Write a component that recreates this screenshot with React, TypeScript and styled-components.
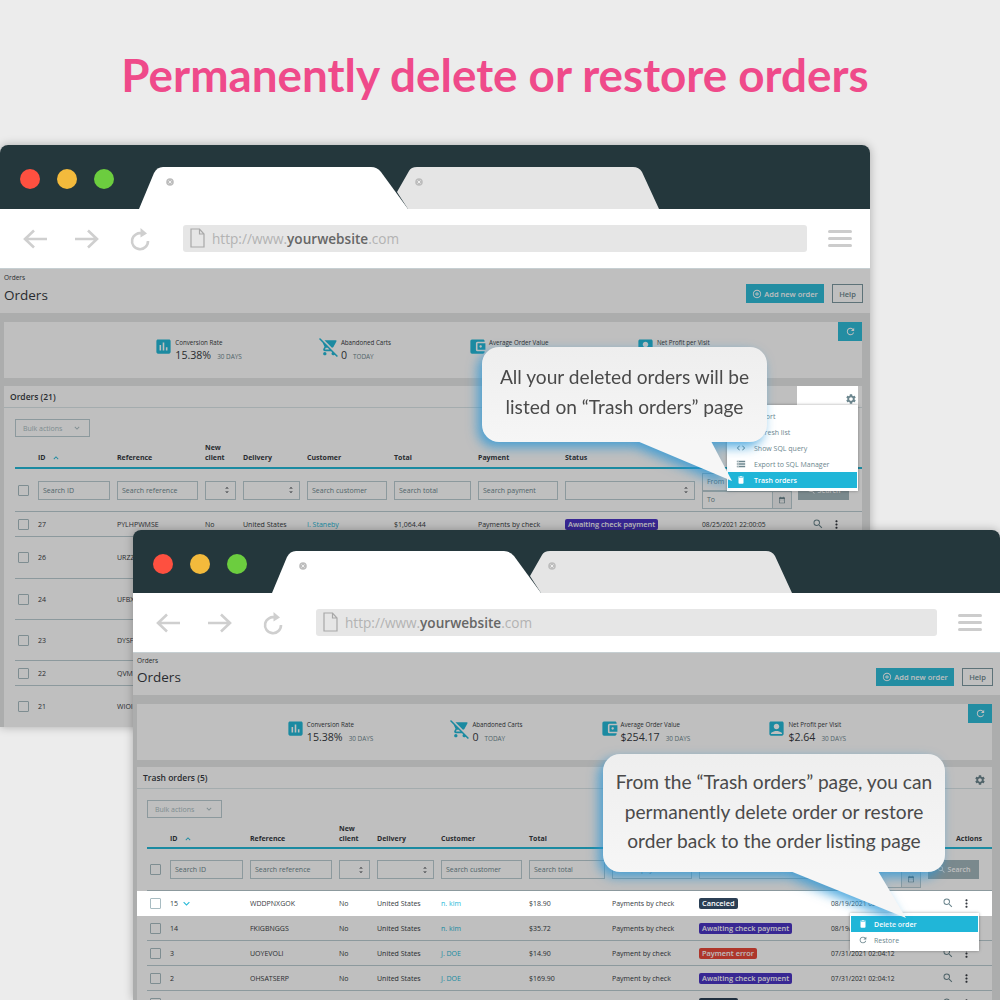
import { ReactElement, ReactNode } from 'react';
import styled, { createGlobalStyle } from 'styled-components';
import {
  MdAccountBalanceWallet,
  MdAccountBox,
  MdAddCircleOutline,
  MdAssessment,
  MdCloudUpload,
  MdCode,
  MdDateRange,
  MdDelete,
  MdKeyboardArrowDown,
  MdKeyboardArrowUp,
  MdMoreVert,
  MdRefresh,
  MdRemoveShoppingCart,
  MdSearch,
  MdSettings,
  MdStorage,
  MdUnfoldMore,
} from 'react-icons/md';

const GlobalStyle = createGlobalStyle`
  html, body {
    margin: 0;
    background: #ececec;
  }
  * {
    box-sizing: border-box;
  }
`;

const Page = styled.div`
  position: relative;
  width: 1000px;
  height: 1000px;
  overflow: hidden;
  background: #ececec;
`;

const Headline = styled.h1`
  margin: 0;
  padding: 47px 10px 0 0;
  text-align: center;
  font-family: 'Lato', sans-serif;
  font-weight: 700;
  font-size: 45.8px;
  line-height: 56px;
  color: #ef4a8a;
`;

const Window = styled.div<{ $x: number; $y: number; $w: number; $h: number }>`
  position: absolute;
  isolation: isolate;
  left: ${(p) => p.$x}px;
  top: ${(p) => p.$y}px;
  width: ${(p) => p.$w}px;
  height: ${(p) => p.$h}px;
  border-radius: 8px 8px 0 0;
  box-shadow: 0 0 10px rgba(0, 0, 0, 0.28);
  display: flex;
  flex-direction: column;
`;

const TitleBar = styled.div<{ $compact?: boolean }>`
  flex: none;
  height: ${(p) => (p.$compact ? 63 : 64)}px;
  display: flex;
  padding-left: 20px;
  gap: 17px;
  background: #24373c;
  border-radius: 8px 8px 0 0;
`;

const Light = styled.span<{ $color: string }>`
  flex: none;
  width: 20px;
  height: 20px;
  margin-top: 24px;
  border-radius: 50%;
  background: ${(p) => p.$color};
`;

const Tabs = styled.svg`
  align-self: flex-end;
  margin-left: 8px;
  display: block;
`;

const Toolbar = styled.div`
  flex: none;
  height: 59px;
  display: flex;
  align-items: center;
  background: #fff;
  padding: 0 18px 0 23px;
`;

const NavIcon = styled.svg`
  flex: none;
  display: block;
  margin-right: 28px;
`;

const ReloadIcon = styled.svg`
  flex: none;
  display: block;
  margin-left: 3px;
`;

const AddressBar = styled.div`
  flex: 1;
  height: 27px;
  margin: -1px 21px 0 33px;
  padding-left: 7px;
  display: flex;
  align-items: center;
  gap: 7px;
  border-radius: 3px;
  background: #e6e6e6;
  font-family: 'Open Sans', sans-serif;
  font-size: 13.6px;
  color: #b3b3b3;

  strong {
    font-weight: 600;
    color: #666;
  }
`;

const Burger = styled.div`
  flex: none;
  width: 24px;
  display: flex;
  flex-direction: column;
  gap: 4px;

  span {
    height: 3px;
    border-radius: 2px;
    background: #ccc;
  }
`;

const Content = styled.div`
  position: relative;
  flex: 1;
  overflow: hidden;
  background: #e6e7e7;
  border-top: 1px solid #c6cfd2;
  font-family: 'Open Sans', sans-serif;
  color: #363a41;

  &::after {
    content: '';
    position: absolute;
    inset: 0;
    z-index: 1;
    background: rgba(0, 0, 0, 0.25);
  }
`;

const PageHeader = styled.div<{ $compact?: boolean }>`
  height: ${(p) => (p.$compact ? 42 : 44)}px;
  background: #fff;
  padding: ${(p) => (p.$compact ? 3 : 4)}px 7px 0 4px;
  display: flex;
  justify-content: space-between;
`;

const Crumb = styled.div`
  font-size: 6.5px;
  line-height: 9px;
`;

const PageTitle = styled.div<{ $compact?: boolean }>`
  font-size: 13.5px;
  line-height: 18px;
  margin-top: ${(p) => (p.$compact ? 3 : 4)}px;
`;

const HeaderButtons = styled.div<{ $compact?: boolean }>`
  display: flex;
  gap: 8px;
  margin-top: ${(p) => (p.$compact ? 12 : 11)}px;
  height: ${(p) => (p.$compact ? 18 : 19)}px;
`;

const AddButton = styled.div`
  width: 78px;
  display: flex;
  align-items: center;
  justify-content: center;
  gap: 2px;
  background: #2fbcd9;
  color: #fff;
  font-size: 7.5px;
  font-weight: 600;
  white-space: nowrap;
`;

const HelpButton = styled.div`
  width: 31px;
  display: flex;
  align-items: center;
  justify-content: center;
  border: 1px solid #7d99a1;
  color: #6c868e;
  font-size: 7.5px;
  font-weight: 600;
`;

const Body = styled.div<{ $compact?: boolean }>`
  padding: 9px 8px 0 4px;
  display: flex;
  flex-direction: column;
  gap: ${(p) => (p.$compact ? 7 : 8)}px;
`;

const KpiCard = styled.div`
  position: relative;
  height: 56px;
  background: #fff;
  display: flex;
  justify-content: center;
  gap: 77px;
  padding: 15px 0 0 3px;
`;

const KpiRefresh = styled.div`
  position: absolute;
  top: 0;
  right: 0;
  width: 24px;
  height: 19px;
  display: flex;
  align-items: center;
  justify-content: center;
  background: #2fbcd9;
  color: #fff;
`;

const Kpi = styled.div`
  display: flex;
  gap: 2px;
  color: #25b9d7;
`;

const KpiText = styled.div`
  color: #363a41;
  font-size: 6.2px;
  line-height: 9px;
  padding-top: 1px;
`;

const KpiValue = styled.div`
  display: flex;
  align-items: baseline;
  gap: 6px;
  font-size: 10.6px;
  line-height: 15px;
  margin-top: 1px;

  small {
    font-size: 6.4px;
    color: #6c868e;
  }
`;

const TableCard = styled.div<{ $left: number }>`
  position: relative;
  background: #fff;
  height: 500px;
  padding-left: ${(p) => p.$left}px;
`;

const CardHead = styled.div<{ $left: number }>`
  height: 22px;
  margin-left: -${(p) => p.$left}px;
  padding: 0 6px;
  display: flex;
  align-items: center;
  border-bottom: 1px solid #dbe6e9;
  font-size: 8.5px;
  font-weight: 600;
`;

const GearCorner = styled.div<{ $lit?: boolean }>`
  position: absolute;
  top: 0;
  right: ${(p) => (p.$lit ? 4 : 5)}px;
  width: 61px;
  height: 19px;
  display: flex;
  align-items: flex-end;
  justify-content: flex-end;
  padding-right: 1px;
  color: #6c868e;
  background: ${(p) => (p.$lit ? '#fff' : 'transparent')};
  z-index: ${(p) => (p.$lit ? 2 : 0)};
`;

const BulkSelect = styled.div`
  width: 75px;
  height: 18px;
  margin: 11px 0 6px;
  padding: 0 7px;
  display: flex;
  align-items: center;
  justify-content: space-between;
  border: 1px solid #bbcdd2;
  color: #a9bcc1;
  font-size: 7px;
`;

const Grid = styled.div<{ $cols: string; $h: number }>`
  display: grid;
  grid-template-columns: ${(p) => p.$cols};
  height: ${(p) => p.$h}px;
  align-items: center;
  font-size: 7px;
`;

const HeadRow = styled(Grid)`
  align-items: end;
  border-bottom: 2px solid #25b9d7;
  padding-bottom: 4px;
  font-weight: 700;
  line-height: 10px;
`;

const HeadCell = styled.div`
  display: flex;
  align-items: center;
  gap: 5px;
  color: #363a41;
`;

const ActionsHead = styled(HeadCell)`
  justify-content: flex-end;
`;

const FilterRow = styled(Grid)`
  border-bottom: 1px solid #bbcdd2;
  align-items: center;
`;

const Field = styled.div`
  height: 19px;
  margin-right: 7px;
  padding: 0 4px;
  display: flex;
  align-items: center;
  justify-content: space-between;
  border: 1px solid #bbcdd2;
  background: #fff;
  color: #6c868e;
  font-size: 7px;
  white-space: nowrap;
`;

const DateStack = styled.div`
  width: 90px;
  display: flex;
  flex-direction: column;
  margin-top: 1px;
`;

const DateField = styled(Field)`
  height: 18px;
  margin-right: 0;
  padding: 0 0 0 4px;

  span {
    width: 19px;
    height: 100%;
    display: flex;
    align-items: center;
    justify-content: center;
    border-left: 1px solid #bbcdd2;
    background: #eff1f2;
  }
`;

const SearchButton = styled.div`
  width: 51px;
  height: 19px;
  display: flex;
  align-items: center;
  justify-content: center;
  gap: 2px;
  background: #a3b7bd;
  color: #fff;
  font-size: 7px;
  font-weight: 600;
`;

const Check = styled.span`
  display: block;
  width: 11px;
  height: 11px;
  margin-left: 3px;
  border: 1px solid #a8bcc2;
  border-radius: 1px;
  background: #fff;
`;

const DataRow = styled(Grid)<{ $lit?: boolean }>`
  position: relative;
  white-space: nowrap;
  border-bottom: 1px solid #bbcdd2;
  color: #363a41;
  ${(p) =>
    p.$lit &&
    `
    z-index: 2;
    margin: 0 0 0 -10px;
    padding: 0 10px;
    width: 855px;
    background: #fff;
    border-bottom-color: #fff;
  `}
`;

const IdCell = styled.div`
  display: flex;
  align-items: center;
  gap: 2px;
  color: #25b9d7;

  span {
    color: #363a41;
  }
`;

const Customer = styled.div`
  color: #25b9d7;
`;

const OrderDate = styled.div`
  font-size: 6.7px;
`;

const Badge = styled.span<{ $bg: string }>`
  display: inline-block;
  padding: 1px 3px;
  border-radius: 2px;
  background: ${(p) => p.$bg};
  color: #fff;
  font-size: 7.4px;
  font-weight: 600;
  line-height: 9px;
`;

const RowActions = styled.div`
  display: flex;
  align-items: center;
  gap: 6px;
  padding-left: 14px;
  color: #6c868e;

  svg:last-child {
    color: #363a41;
  }
`;

const Menu = styled.div<{ $x: number; $y: number; $w: number }>`
  position: absolute;
  left: ${(p) => p.$x}px;
  top: ${(p) => p.$y}px;
  width: ${(p) => p.$w}px;
  z-index: 3;
  padding: 3px 1px;
  background: #fff;
  box-shadow: 0 0 3px rgba(0, 0, 0, 0.35);
`;

const MenuItem = styled.div<{ $active?: boolean; $tight?: boolean }>`
  height: 16px;
  display: flex;
  align-items: center;
  gap: ${(p) => (p.$tight ? 6 : 8)}px;
  padding-left: ${(p) => (p.$tight ? 7 : 8)}px;
  font-size: 7px;
  background: ${(p) => (p.$active ? '#20b6d8' : 'transparent')};
  color: ${(p) => (p.$active ? '#fff' : '#6c868e')};
  font-weight: ${(p) => (p.$active ? 600 : 400)};
`;

const Bubble = styled.div<{ $x: number; $y: number; $w: number; $h: number }>`
  position: absolute;
  left: ${(p) => p.$x}px;
  top: ${(p) => p.$y}px;
  width: ${(p) => p.$w}px;
  height: ${(p) => p.$h}px;
  z-index: 4;
  filter: drop-shadow(-4px 5px 6px rgba(40, 150, 215, 0.8));
`;

const BubbleBody = styled.div<{ $lift: number }>`
  height: 100%;
  padding-bottom: ${(p) => p.$lift}px;
  display: flex;
  flex-direction: column;
  justify-content: center;
  align-items: center;
  border-radius: 17px;
  background: linear-gradient(#eeeeee, #f6f6f6);
  font-family: 'Lato', sans-serif;
  font-size: 19.15px;
  line-height: 29.6px;
  color: #4a4a4a;
  white-space: nowrap;
`;

const BubbleTail = styled.svg<{ $x: number; $y: number }>`
  position: absolute;
  left: ${(p) => p.$x}px;
  top: ${(p) => p.$y}px;
  display: block;
`;

function TabShape(): ReactElement {
  const closeDot = (cx: number): ReactElement => (
    <g>
      <circle cx={cx} cy={15} r={3.8} fill="#bdbdbd" />
      <path d={`M${cx - 1.5} 13.5l3 3m0-3l-3 3`} stroke="#eee" strokeWidth={1} />
    </g>
  );
  return (
    <Tabs width={530} height={42} viewBox="0 0 530 42">
      <path d="M258 25 L270 4 Q272 0 278 0 L494 0 Q500 0 503 5 L520 42 L269 42 Z" fill="#e5e5e5" />
      {closeDot(280)}
      <path d="M0 42 L15 6 Q18 0 24 0 L232 0 Q238 0 242 5 L269 42 Z" fill="#fff" />
      {closeDot(31)}
    </Tabs>
  );
}

function BrowserChrome({ compact }: { compact?: boolean }): ReactElement {
  return (
    <>
      <TitleBar $compact={compact}>
        <Light $color="#fe5040" />
        <Light $color="#f3ba3c" />
        <Light $color="#6ccd3f" />
        <TabShape />
      </TitleBar>
      <Toolbar>
        <NavIcon width={24} height={20} viewBox="0 0 24 20" fill="none" stroke="#cfcfcf" strokeWidth={2.6}>
          <path d="M24 10H2M11 1.5L2 10l9 8.5" />
        </NavIcon>
        <NavIcon width={24} height={20} viewBox="0 0 24 20" fill="none" stroke="#cfcfcf" strokeWidth={2.6}>
          <path d="M0 10h22M13 1.5l9 8.5-9 8.5" />
        </NavIcon>
        <ReloadIcon width={20} height={24} viewBox="0 0 20 24">
          <path d="M12.5 6.6A8 8 0 1 0 18 14" fill="none" stroke="#cfcfcf" strokeWidth={2.6} />
          <path d="M10.5 1l6.5 5.5-6.5 4z" fill="#cfcfcf" />
        </ReloadIcon>
        <AddressBar>
          <svg width={15} height={20} viewBox="0 0 15 20" fill="none" stroke="#a8a8a8" strokeWidth={1.2}>
            <path d="M1 1h8.5L14 6v13H1zM9.5 1v5H14" />
          </svg>
          <span>
            http://www.<strong>yourwebsite</strong>.com
          </span>
        </AddressBar>
        <Burger>
          <span />
          <span />
          <span />
        </Burger>
      </Toolbar>
    </>
  );
}

interface KpiData {
  icon: ReactNode;
  label: string;
  value: string;
  period: string;
}

const kpis: KpiData[] = [
  { icon: <MdAssessment size={19} />, label: 'Conversion Rate', value: '15.38%', period: '30 DAYS' },
  { icon: <MdRemoveShoppingCart size={20} />, label: 'Abandoned Carts', value: '0', period: 'TODAY' },
  { icon: <MdAccountBalanceWallet size={19} />, label: 'Average Order Value', value: '$254.17', period: '30 DAYS' },
  { icon: <MdAccountBox size={19} />, label: 'Net Profit per Visit', value: '$2.64', period: '30 DAYS' },
];

function KpiStrip(): ReactElement {
  return (
    <KpiCard>
      {kpis.map((kpi) => (
        <Kpi key={kpi.label}>
          {kpi.icon}
          <KpiText>
            {kpi.label}
            <KpiValue>
              {kpi.value}
              <small>{kpi.period}</small>
            </KpiValue>
          </KpiText>
        </Kpi>
      ))}
      <KpiRefresh>
        <MdRefresh size={11} />
      </KpiRefresh>
    </KpiCard>
  );
}

function AdminHeader({ compact }: { compact?: boolean }): ReactElement {
  return (
    <PageHeader $compact={compact}>
      <div>
        <Crumb>Orders</Crumb>
        <PageTitle $compact={compact}>Orders</PageTitle>
      </div>
      <HeaderButtons $compact={compact}>
        <AddButton>
          <MdAddCircleOutline size={10} />
          Add new order
        </AddButton>
        <HelpButton>Help</HelpButton>
      </HeaderButtons>
    </PageHeader>
  );
}

const statusColors = {
  awaiting: '#4b35c4',
  error: '#e8493a',
  canceled: '#2b3f55',
};

interface OrderRow {
  id: string;
  reference: string;
  customer: string;
  total: string;
  payment: string;
  status: string;
  tone: keyof typeof statusColors;
  date: string;
  height: number;
  open?: boolean;
}

function OrderLine({ row, cols }: { row: OrderRow; cols: string }): ReactElement {
  return (
    <DataRow $cols={cols} $h={row.height} $lit={row.open}>
      <Check />
      <IdCell>
        <span>{row.id}</span>
        {row.open && <MdKeyboardArrowDown size={13} />}
      </IdCell>
      <div>{row.reference}</div>
      <div>No</div>
      <div>United States</div>
      <Customer>{row.customer}</Customer>
      <div>{row.total}</div>
      <div>{row.payment}</div>
      <div>
        <Badge $bg={statusColors[row.tone]}>{row.status}</Badge>
      </div>
      <OrderDate>{row.date}</OrderDate>
      <RowActions>
        <MdSearch size={12} />
        <MdMoreVert size={13} />
      </RowActions>
    </DataRow>
  );
}

function TableHead({ cols, height, actions }: { cols: string; height: number; actions?: string }): ReactElement {
  return (
    <HeadRow $cols={cols} $h={height}>
      <span />
      <HeadCell>
        ID
        <MdKeyboardArrowUp size={10} color="#25b9d7" />
      </HeadCell>
      <HeadCell>Reference</HeadCell>
      <HeadCell>
        New
        <br />
        client
      </HeadCell>
      <HeadCell>Delivery</HeadCell>
      <HeadCell>Customer</HeadCell>
      <HeadCell>Total</HeadCell>
      <HeadCell>Payment</HeadCell>
      <HeadCell>Status</HeadCell>
      <HeadCell>Date</HeadCell>
      <ActionsHead>{actions}</ActionsHead>
    </HeadRow>
  );
}

function TableFilters({ cols, height }: { cols: string; height: number }): ReactElement {
  return (
    <FilterRow $cols={cols} $h={height}>
      <Check />
      <Field>Search ID</Field>
      <Field>Search reference</Field>
      <Field>
        <span />
        <MdUnfoldMore size={8} color="#363a41" />
      </Field>
      <Field>
        <span />
        <MdUnfoldMore size={8} color="#363a41" />
      </Field>
      <Field>Search customer</Field>
      <Field>Search total</Field>
      <Field>Search payment</Field>
      <Field>
        <span />
        <MdUnfoldMore size={8} color="#363a41" />
      </Field>
      <DateStack>
        <DateField>
          From
          <span>
            <MdDateRange size={8} />
          </span>
        </DateField>
        <DateField>
          To
          <span>
            <MdDateRange size={8} />
          </span>
        </DateField>
      </DateStack>
      <SearchButton>
        <MdSearch size={9} />
        Search
      </SearchButton>
    </FilterRow>
  );
}

function BulkActions(): ReactElement {
  return (
    <BulkSelect>
      Bulk actions
      <MdKeyboardArrowDown size={10} />
    </BulkSelect>
  );
}

const firstCols = '23px 79px 88px 38px 64px 87px 84px 87px 137px 96px 59px';
const secondCols = '23px 80px 89px 38px 64px 88px 83px 87px 132px 97px 54px';

const firstRows: OrderRow[] = [
  { id: '27', reference: 'PYLHPWMSE', customer: 'I. Staneby', total: '$1,064.44', payment: 'Payments by check', status: 'Awaiting check payment', tone: 'awaiting', date: '08/25/2021 22:00:05', height: 25 },
  { id: '26', reference: 'URZZOGTIS', customer: 'I. Staneby', total: '$64.90', payment: 'Payments by check', status: 'Canceled', tone: 'canceled', date: '08/25/2021 21:40:12', height: 42 },
  { id: '24', reference: 'UFBXKQWEA', customer: 'I. Staneby', total: '$35.72', payment: 'Payments by check', status: 'Canceled', tone: 'canceled', date: '08/24/2021 20:10:45', height: 41 },
  { id: '23', reference: 'DYSFLMRTO', customer: 'J. DOE', total: '$18.90', payment: 'Payments by check', status: 'Canceled', tone: 'canceled', date: '08/19/2021 02:04:12', height: 41 },
  { id: '22', reference: 'QVMHRTPBN', customer: 'J. DOE', total: '$14.90', payment: 'Payment by check', status: 'Canceled', tone: 'canceled', date: '08/19/2021 02:04:12', height: 25 },
  { id: '21', reference: 'WIOIKLNEF', customer: 'J. DOE', total: '$21.00', payment: 'Payment by check', status: 'Canceled', tone: 'canceled', date: '08/19/2021 02:04:12', height: 42 },
];

const secondRows: OrderRow[] = [
  { id: '15', reference: 'WDDPNXGOK', customer: 'n. kim', total: '$18.90', payment: 'Payments by check', status: 'Canceled', tone: 'canceled', date: '08/19/2021 02:04:12', height: 25, open: true },
  { id: '14', reference: 'FKIGBNGGS', customer: 'n. kim', total: '$35.72', payment: 'Payments by check', status: 'Awaiting check payment', tone: 'awaiting', date: '08/19/2021 02:04:12', height: 25 },
  { id: '3', reference: 'UOYEVOLI', customer: 'J. DOE', total: '$14.90', payment: 'Payment by check', status: 'Payment error', tone: 'error', date: '07/31/2021 02:04:12', height: 25 },
  { id: '2', reference: 'OHSATSERP', customer: 'J. DOE', total: '$169.90', payment: 'Payment by check', status: 'Awaiting check payment', tone: 'awaiting', date: '07/31/2021 02:04:12', height: 25 },
  { id: '1', reference: 'XKBKNABJK', customer: 'J. DOE', total: '$61.80', payment: 'Payment by check', status: 'Canceled', tone: 'canceled', date: '07/31/2021 02:04:12', height: 25 },
];

export default function App(): ReactElement {
  return (
    <Page>
      <GlobalStyle />
      <Headline>Permanently delete or restore orders</Headline>

      <Window $x={0} $y={145} $w={870} $h={582}>
        <BrowserChrome />
        <Content>
          <AdminHeader />
          <Body>
            <KpiStrip />
            <TableCard $left={11}>
              <CardHead $left={11}>Orders (21)</CardHead>
              <GearCorner $lit>
                <MdSettings size={12} />
              </GearCorner>
              <BulkActions />
              <TableHead cols={firstCols} height={26} />
              <TableFilters cols={firstCols} height={43} />
              {firstRows.map((row) => (
                <OrderLine key={row.id} row={row} cols={firstCols} />
              ))}
              <Menu $x={723} $y={19} $w={131}>
                <MenuItem>
                  <MdCloudUpload size={10} />
                  Export
                </MenuItem>
                <MenuItem>
                  <MdRefresh size={10} />
                  Refresh list
                </MenuItem>
                <MenuItem>
                  <MdCode size={10} />
                  Show SQL query
                </MenuItem>
                <MenuItem>
                  <MdStorage size={10} />
                  Export to SQL Manager
                </MenuItem>
                <MenuItem $active>
                  <MdDelete size={10} />
                  Trash orders
                </MenuItem>
              </Menu>
            </TableCard>
          </Body>
        </Content>
        <Bubble $x={482} $y={202} $w={285} $h={95}>
          <BubbleBody $lift={6}>
            <span>All your deleted orders will be</span>
            <span>listed on “Trash orders” page</span>
          </BubbleBody>
          <BubbleTail $x={150} $y={94} width={110} height={42} viewBox="0 0 110 42">
            <path d="M5 0 L100 40 L79 0 Z" fill="#f6f6f6" />
          </BubbleTail>
        </Bubble>
      </Window>

      <Window $x={133} $y={530} $w={867} $h={470}>
        <BrowserChrome compact />
        <Content>
          <AdminHeader compact />
          <Body $compact>
            <KpiStrip />
            <TableCard $left={10}>
              <CardHead $left={10}>Trash orders (5)</CardHead>
              <GearCorner>
                <MdSettings size={12} />
              </GearCorner>
              <BulkActions />
              <TableHead cols={secondCols} height={25} actions="Actions" />
              <TableFilters cols={secondCols} height={42} />
              {secondRows.map((row) => (
                <OrderLine key={row.id} row={row} cols={secondCols} />
              ))}
              <Menu $x={713} $y={146} $w={129}>
                <MenuItem $active $tight>
                  <MdDelete size={10} />
                  Delete order
                </MenuItem>
                <MenuItem $tight>
                  <MdRefresh size={10} />
                  Restore
                </MenuItem>
              </Menu>
            </TableCard>
          </Body>
        </Content>
        <Bubble $x={470} $y={224} $w={342} $h={118}>
          <BubbleBody $lift={3}>
            <span>From the “Trash orders” page, you can</span>
            <span>permanently delete order or restore</span>
            <span>order back to the order listing page</span>
          </BubbleBody>
          <BubbleTail $x={185} $y={117} width={120} height={50} viewBox="0 0 120 50">
            <path d="M2 0 L118 47 L90 0 Z" fill="#f6f6f6" />
          </BubbleTail>
        </Bubble>
      </Window>
    </Page>
  );
}
